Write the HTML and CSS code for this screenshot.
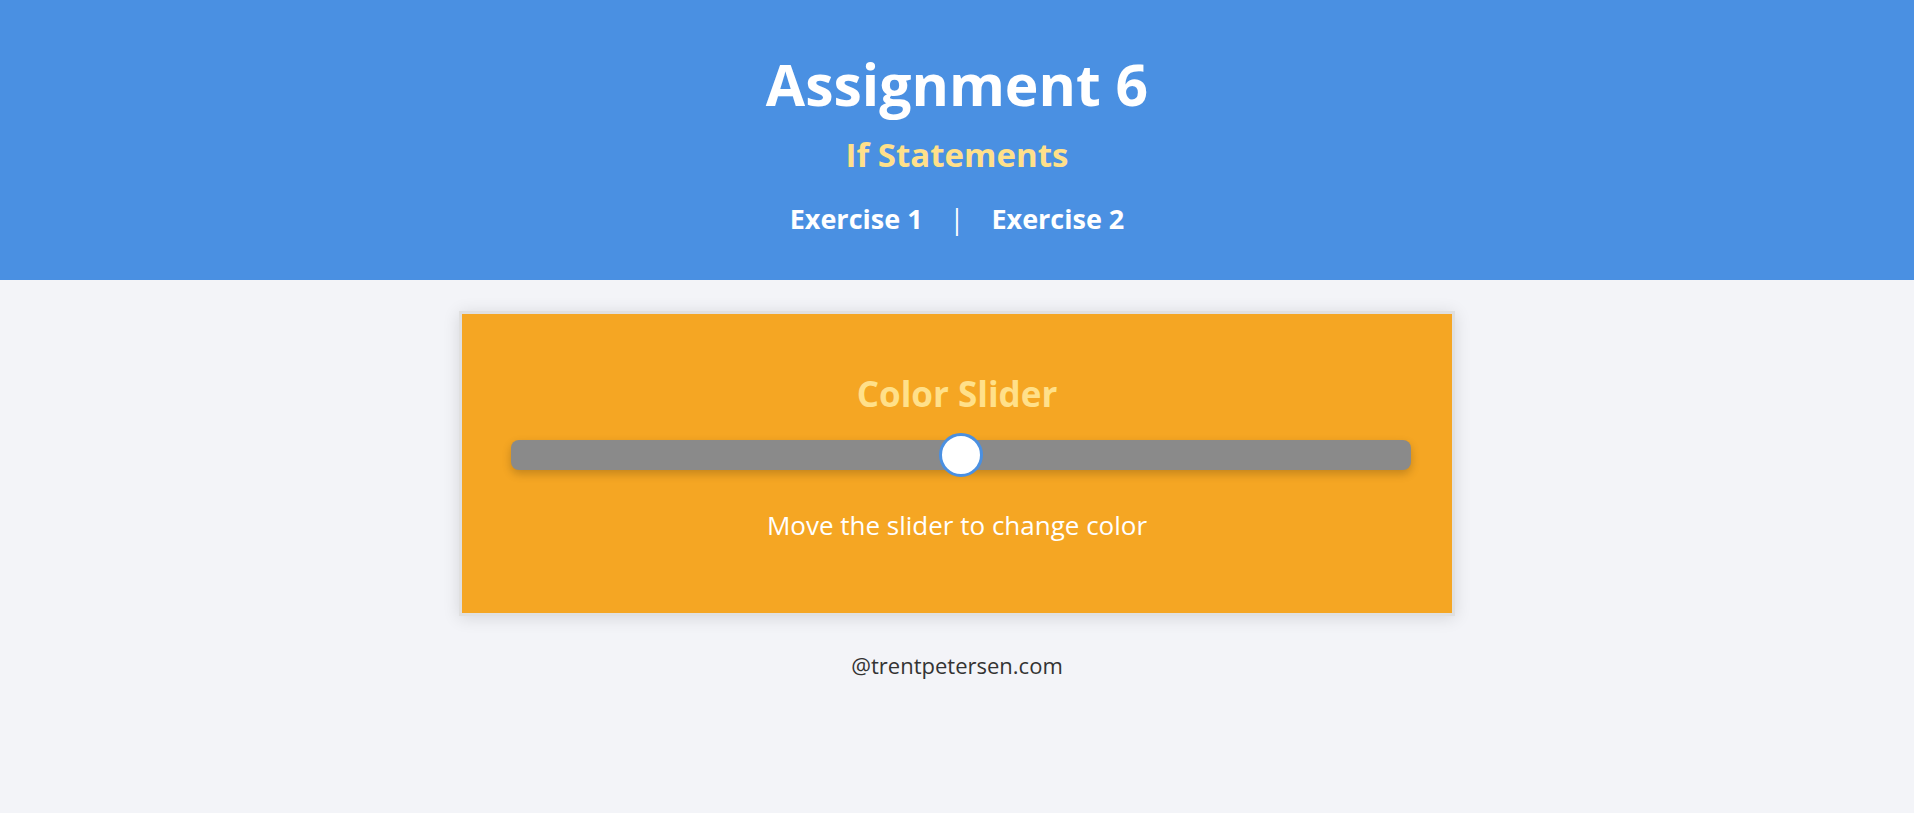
FILE: index.html
```html
<!DOCTYPE html>
<html lang="en">
<head>
<meta charset="utf-8">
<title>Assignment 6</title>
<link rel="stylesheet" href="styles.css">
</head>
<body>
<header class="site-header">
  <h1 class="title">Assignment 6</h1>
  <h2 class="subtitle">If Statements</h2>
  <nav class="nav">
    <a class="nav-link" href="#">Exercise 1</a>
    <span class="nav-sep">|</span>
    <a class="nav-link" href="#">Exercise 2</a>
  </nav>
</header>
<main class="main">
  <section class="card">
    <h3 class="card-title">Color Slider</h3>
    <input class="slider" type="range" min="0" max="100" value="50">
    <p class="card-text">Move the slider to change color</p>
  </section>
  <footer class="footer">@trentpetersen.com</footer>
</main>
</body>
</html>
```

FILE: styles.css
```css
* {
  box-sizing: border-box;
}

html, body {
  margin: 0;
  padding: 0;
}

body {
  background: #f3f4f8;
  font-family: "Open Sans", "Noto Sans", sans-serif;
  color: #333;
  min-height: 813px;
}

.site-header {
  background: #4a90e2;
  height: 280px;
  padding-top: 56px;
  display: flex;
  flex-direction: column;
  align-items: center;
}

.title {
  margin: 0;
  font-size: 57px;
  line-height: 1;
  font-weight: 700;
  color: #fff;
}

.subtitle {
  margin: 25px 0 0;
  font-size: 33px;
  line-height: 1;
  font-weight: 700;
  color: #ffe08a;
}

.nav {
  margin-top: 34px;
  display: flex;
  align-items: center;
  gap: 27px;
  font-size: 27px;
  line-height: 1;
}

.nav-link {
  color: #fff;
  font-weight: 700;
  text-decoration: none;
}

.nav-sep {
  color: #fff;
  font-weight: 400;
}

.main {
  display: flex;
  flex-direction: column;
  align-items: center;
  padding-top: 31px;
}

.card {
  width: 996px;
  height: 305px;
  background: #f5a623;
  border: 3px solid #e0e0e0;
  box-shadow: 0 2px 16px rgba(0, 0, 0, 0.12);
  padding-top: 62px;
  display: flex;
  flex-direction: column;
  align-items: center;
}

.card-title {
  margin: 0;
  font-size: 35px;
  line-height: 1;
  font-weight: 700;
  color: #ffe08a;
}

.slider {
  -webkit-appearance: none;
  appearance: none;
  margin: 29px 0 0 8px;
  width: 900px;
  height: 30px;
  background: #8a8a8a;
  border-radius: 8px;
  box-shadow: 0 4px 10px rgba(0, 0, 0, 0.2);
  outline: none;
}

.slider::-webkit-slider-thumb {
  -webkit-appearance: none;
  appearance: none;
  width: 44px;
  height: 44px;
  box-sizing: border-box;
  border-radius: 50%;
  background: #fff;
  border: 3px solid #4a90e2;
  cursor: pointer;
}

.card-text {
  margin: 42px 0 0;
  font-size: 26px;
  line-height: 1;
  font-weight: 400;
  color: #fff;
}

.footer {
  margin-top: 38px;
  font-size: 22px;
  line-height: 1;
  color: #333;
}
```
